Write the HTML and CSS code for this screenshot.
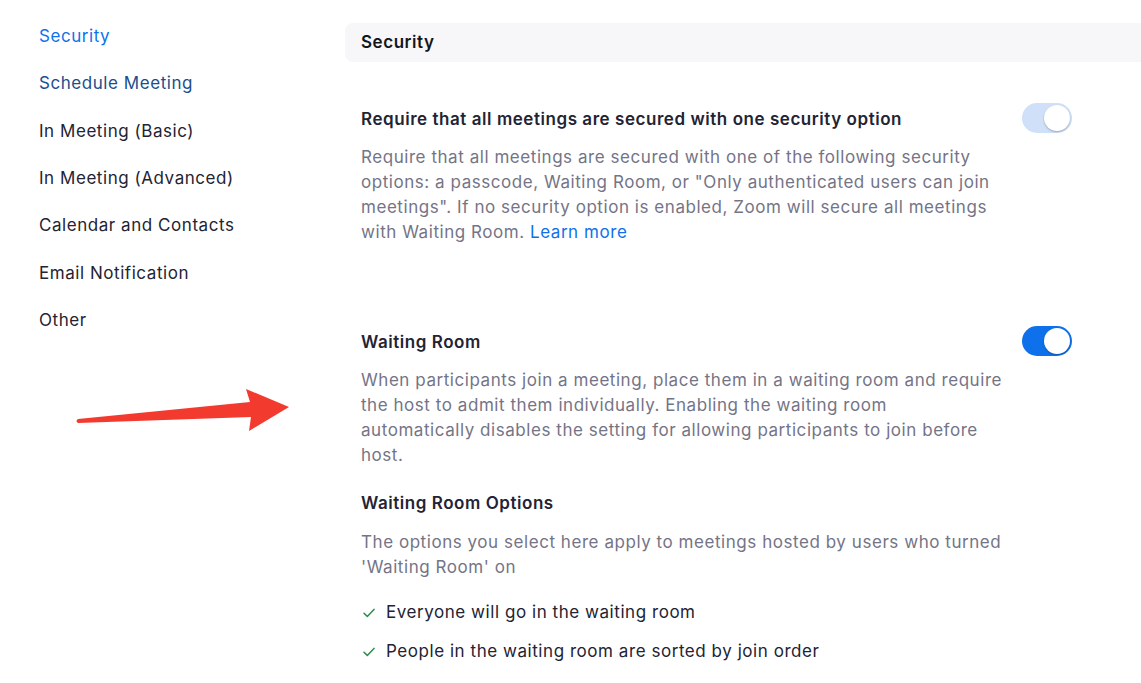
FILE: index.html
```html
<!DOCTYPE html>
<html lang="en">
<head>
<meta charset="utf-8">
<title>Settings - Security</title>
<link rel="stylesheet" href="styles.css">
</head>
<body>
<div class="page">
  <nav class="sidebar">
    <a class="nav-item active">Security</a>
    <a class="nav-item visited">Schedule Meeting</a>
    <a class="nav-item">In Meeting (Basic)</a>
    <a class="nav-item">In Meeting (Advanced)</a>
    <a class="nav-item">Calendar and Contacts</a>
    <a class="nav-item">Email Notification</a>
    <a class="nav-item">Other</a>
  </nav>
  <main class="main">
    <div class="section-header">Security</div>
    <div class="content">
      <div class="setting first">
        <div class="setting-text">
          <div class="setting-title">Require that all meetings are secured with one security option</div>
          <p class="setting-desc">Require that all meetings are secured with one of the following security options: a passcode, Waiting Room, or "Only authenticated users can join meetings". If no security option is enabled, Zoom will secure all meetings with Waiting Room. <a class="link">Learn more</a></p>
        </div>
        <div class="toggle on disabled"><span class="knob"></span></div>
      </div>
      <div class="setting second">
        <div class="setting-text">
          <div class="setting-title">Waiting Room</div>
          <p class="setting-desc">When participants join a meeting, place them in a waiting room and require the host to admit them individually. Enabling the waiting room automatically disables the setting for allowing participants to join before host.</p>
          <div class="sub-title">Waiting Room Options</div>
          <p class="setting-desc sub-desc">The options you select here apply to meetings hosted by users who turned 'Waiting Room' on</p>
          <ul class="checks">
            <li><svg class="check" width="12" height="10" viewBox="0 0 12 10"><path d="M1 5.2 L4.3 8.4 L11 1.4" fill="none" stroke="#2e8b4e" stroke-width="1.5" stroke-linecap="round" stroke-linejoin="round"/></svg>Everyone will go in the waiting room</li>
            <li><svg class="check" width="12" height="10" viewBox="0 0 12 10"><path d="M1 5.2 L4.3 8.4 L11 1.4" fill="none" stroke="#2e8b4e" stroke-width="1.5" stroke-linecap="round" stroke-linejoin="round"/></svg>People in the waiting room are sorted by join order</li>
          </ul>
        </div>
        <div class="toggle on"><span class="knob"></span></div>
      </div>
    </div>
  </main>
  <svg class="arrow" width="230" height="50" viewBox="0 0 230 50">
    <path d="M3 31 L175 14 L171 1 L214 19 L174 43 L176 29 L3 35 Q0 33 3 31 Z" fill="#f23a2f"/>
  </svg>
</div>
</body>
</html>
```
FILE: styles.css
```css
* { box-sizing: border-box; }
html, body { margin: 0; padding: 0; }
body {
  background: #ffffff;
  font-family: Inter, "Open Sans", "Liberation Sans", sans-serif;
  color: #232333;
  letter-spacing: 0.55px;
  width: 1141px;
  height: 683px;
  overflow: hidden;
}
.page {
  position: relative;
  display: flex;
  height: 683px;
}
.sidebar {
  width: 345px;
  flex: none;
  padding: 13px 0 0 39px;
  display: flex;
  flex-direction: column;
}
.nav-item {
  font-size: 17px;
  line-height: 47.35px;
  color: #232333;
  text-decoration: none;
}
.nav-item.active { color: #0e72ed; }
.nav-item.visited { color: #1c4e8c; }
.main {
  flex: 1;
  padding-top: 23px;
}
.section-header {
  height: 39px;
  background: #f7f7f9;
  border-radius: 8px 0 0 8px;
  padding-left: 16px;
  font-size: 17px;
  font-weight: 600;
  line-height: 39px;
  color: #131619;
}
.content {
  padding: 0 69px 0 16px;
}
.setting {
  display: flex;
  justify-content: space-between;
  align-items: flex-start;
}
.setting.first { margin-top: 45px; }
.setting.second { margin-top: 85px; }
.setting-text { width: 643px; }
.setting-title {
  font-size: 17px;
  font-weight: 600;
  line-height: 24px;
  color: #232333;
}
.setting-desc {
  margin: 14px 0 0;
  font-size: 17px;
  line-height: 25px;
  color: #747487;
}
.link { color: #0e71eb; text-decoration: none; }
.sub-title {
  margin-top: 23px;
  font-size: 17px;
  font-weight: 600;
  line-height: 24px;
  color: #232333;
}
.sub-desc { margin-top: 15px; }
.checks {
  list-style: none;
  margin: 20px 0 0;
  padding: 0;
}
.checks li {
  display: flex;
  align-items: center;
  font-size: 17px;
  line-height: 25px;
  color: #232333;
  margin-bottom: 14px;
}
.check { margin: 0 11px 0 2px; flex: none; }
.toggle {
  width: 50px;
  height: 30px;
  border-radius: 15px;
  background: #0e71eb;
  flex: none;
  margin-top: -4px;
  display: flex;
  align-items: center;
  justify-content: flex-end;
  padding: 0 2px;
}
.toggle.disabled { background: #cfe0f8; }
.knob {
  width: 26px;
  height: 26px;
  border-radius: 50%;
  background: #ffffff;
  box-shadow: 0 1px 2px rgba(0,0,0,0.25);
}
.arrow {
  position: absolute;
  left: 75px;
  top: 388px;
}
```
